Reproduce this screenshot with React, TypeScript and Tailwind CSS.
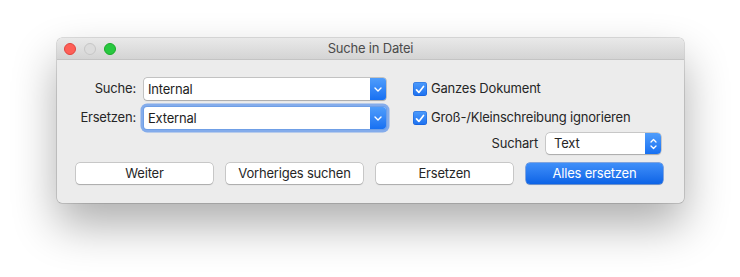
import React from "react"

const font = { fontFamily: "Inter, 'Liberation Sans', sans-serif" }

function Chevron() {
  return (
    <svg width="8" height="5" viewBox="0 0 8 5" fill="none">
      <path d="M1 1l3 3 3-3" stroke="white" strokeWidth="1.4" strokeLinecap="round" strokeLinejoin="round" />
    </svg>
  )
}

function UpDown() {
  return (
    <svg width="7" height="12" viewBox="0 0 7 12" fill="none">
      <path d="M1 4l2.5-2.5L6 4M1 8l2.5 2.5L6 8" stroke="white" strokeWidth="1.3" strokeLinecap="round" strokeLinejoin="round" />
    </svg>
  )
}

function Check() {
  return (
    <span className="flex h-[14px] w-[14px] items-center justify-center rounded-[3px] bg-gradient-to-b from-[#4c9bfb] to-[#1b70f0] shadow-[inset_0_0_0_0.5px_rgba(0,60,180,0.5)]">
      <svg width="10" height="9" viewBox="0 0 10 9" fill="none">
        <path d="M1.5 4.8l2.4 2.6L8.5 1.5" stroke="white" strokeWidth="1.7" strokeLinecap="round" strokeLinejoin="round" />
      </svg>
    </span>
  )
}

function Combo({ value, focused }: { value: string; focused?: boolean }) {
  return (
    <div
      className={`flex h-[22px] w-[242px] items-stretch rounded-[3px] bg-white ${
        focused
          ? "shadow-[0_0_0_1px_#6f9fe6,0_0_0_3.5px_rgba(98,151,235,0.75)]"
          : "shadow-[0_0_0_0.5px_#9d9d9d,0_0.5px_1px_rgba(0,0,0,0.2)]"
      }`}
    >
      <span className="flex-1 pl-[4px] text-[13px] leading-[22px] text-[#1e1e1e]">{value}</span>
      <span className="flex w-[16px] items-center justify-center rounded-r-[3px] bg-gradient-to-b from-[#4f9dfb] to-[#1670f2]">
        <Chevron />
      </span>
    </div>
  )
}

function Btn({ label, primary }: { label: string; primary?: boolean }) {
  return (
    <button
      className={`h-[21px] w-[137px] rounded-[4px] text-[13px] leading-[21px] ${
        primary
          ? "bg-gradient-to-b from-[#3f8ff9] to-[#0b63e6] text-white shadow-[0_0_0_0.5px_#1a62d6,0_0.5px_1px_rgba(0,0,0,0.2)]"
          : "bg-white text-[#262626] shadow-[0_0_0_0.5px_#a8a8a8,0_0.5px_1px_rgba(0,0,0,0.25)]"
      }`}
    >
      {label}
    </button>
  )
}

export default function App() {
  return (
    <div className="h-[277px] w-[740px] bg-white pl-[57px] pt-[38px] tracking-[-0.2px]" style={font}>
      <div className="w-[627px] overflow-hidden rounded-[5px] bg-[#ececec] shadow-[0_0_0_0.5px_rgba(0,0,0,0.25),0_22px_45px_rgba(0,0,0,0.32)]">
        {/* Title bar */}
        <div className="relative flex h-[22px] items-center border-b border-[#c4c4c4] bg-gradient-to-b from-[#e9e9e9] to-[#d4d4d4] pl-[7px]">
          <div className="flex gap-[8px]">
            <span className="h-[12px] w-[12px] rounded-full border border-[#e0443e] bg-[#fe5f57]" />
            <span className="h-[12px] w-[12px] rounded-full border border-[#c6c6c6] bg-[#dcdcdc]" />
            <span className="h-[12px] w-[12px] rounded-full border border-[#1aab29] bg-[#28c840]" />
          </div>
          <span className="absolute inset-x-0 text-center text-[13px] text-[#4b4b4b]">Suche in Datei</span>
        </div>

        {/* Body */}
        <div className="flex flex-col pb-[19px] pl-[19px] pr-[20px] pt-[18px]">
          <div className="flex h-[22px] items-center">
            <span className="w-[60px] text-right text-[13px] text-[#262626]">Suche:</span>
            <div className="ml-[8px]">
              <Combo value="Internal" />
            </div>
            <div className="ml-[27px] flex items-center gap-[4px] text-[13px] text-[#262626]">
              <Check />
              <span>Ganzes Dokument</span>
            </div>
          </div>
          <div className="mt-[7px] flex h-[22px] items-center">
            <span className="w-[60px] text-right text-[13px] text-[#262626]">Ersetzen:</span>
            <div className="ml-[8px]">
              <Combo value="External" focused />
            </div>
            <div className="ml-[27px] flex items-center gap-[4px] text-[13px] text-[#262626]">
              <Check />
              <span>Groß-/Kleinschreibung ignorieren</span>
            </div>
          </div>
          <div className="mr-[3px] mt-[4px] flex h-[21px] items-center justify-end gap-[8px]">
            <span className="text-[13px] text-[#262626]">Suchart</span>
            <div className="flex h-[21px] w-[115px] items-stretch rounded-[4px] bg-white shadow-[0_0_0_0.5px_#a8a8a8,0_0.5px_1px_rgba(0,0,0,0.25)]">
              <span className="flex-1 pl-[8px] text-[13px] leading-[21px] text-[#262626]">Text</span>
              <span className="flex w-[16px] items-center justify-center rounded-r-[4px] bg-gradient-to-b from-[#4f9dfb] to-[#1670f2]">
                <UpDown />
              </span>
            </div>
          </div>
          <div className="mt-[9px] flex gap-[13px]">
            <Btn label="Weiter" />
            <Btn label="Vorheriges suchen" />
            <Btn label="Ersetzen" />
            <Btn label="Alles ersetzen" primary />
          </div>
        </div>
      </div>
    </div>
  )
}
